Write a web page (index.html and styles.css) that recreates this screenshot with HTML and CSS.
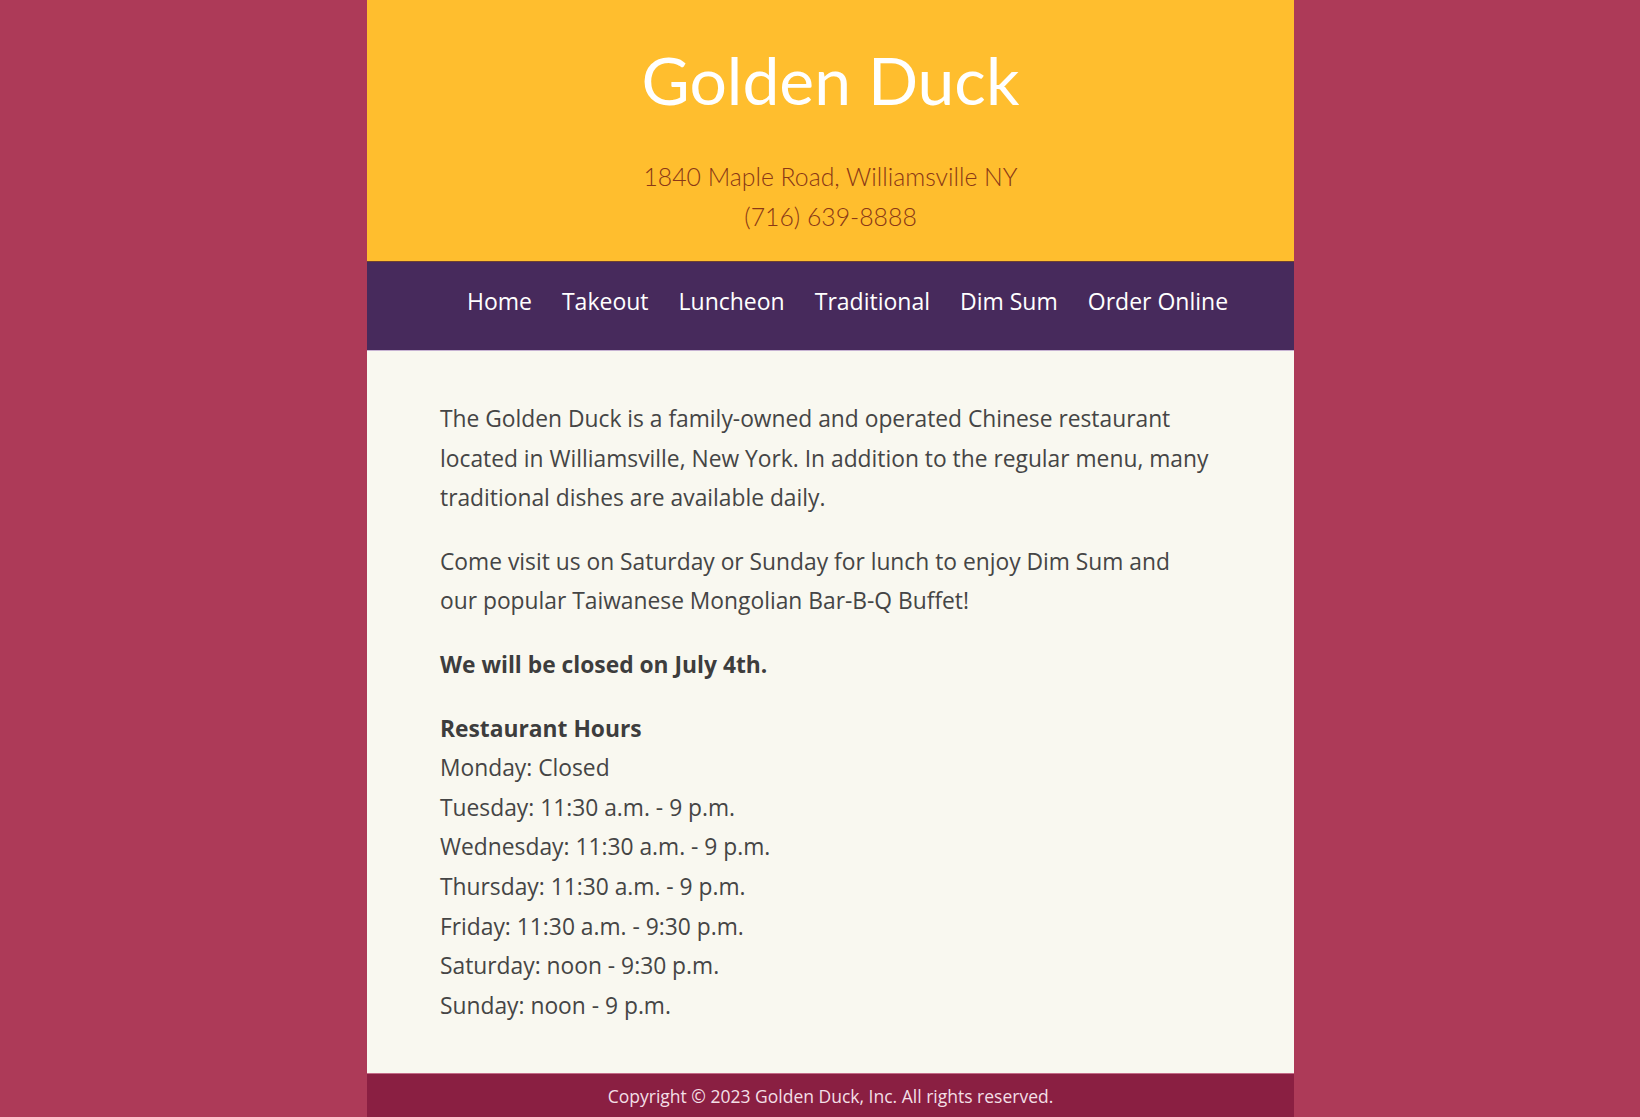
FILE: index.html
```html
<!DOCTYPE html>
<html lang="en">
<head>
<meta charset="utf-8">
<title>Golden Duck</title>
<link rel="stylesheet" href="styles.css">
</head>
<body>
<div class="page">
  <header class="site-header">
    <h1 class="site-title">Golden Duck</h1>
    <p class="address">1840 Maple Road, Williamsville NY<br>(716) 639-8888</p>
  </header>
  <nav class="site-nav">
    <ul class="nav-list">
      <li><a href="#">Home</a></li>
      <li><a href="#">Takeout</a></li>
      <li><a href="#">Luncheon</a></li>
      <li><a href="#">Traditional</a></li>
      <li><a href="#">Dim Sum</a></li>
      <li><a href="#">Order Online</a></li>
    </ul>
  </nav>
  <main class="content">
    <p>The Golden Duck is a family-owned and operated Chinese restaurant located in Williamsville, New York. In addition to the regular menu, many traditional dishes are available daily.</p>
    <p>Come visit us on Saturday or Sunday for lunch to enjoy Dim Sum and our&nbsp;popular Taiwanese Mongolian Bar-B-Q Buffet!</p>
    <p><strong>We will be closed on July 4th.</strong></p>
    <p><strong>Restaurant Hours</strong><br>
      Monday: Closed<br>
      Tuesday: 11:30 a.m. - 9 p.m.<br>
      Wednesday: 11:30 a.m. - 9 p.m.<br>
      Thursday: 11:30 a.m. - 9 p.m.<br>
      Friday: 11:30 a.m. - 9:30 p.m.<br>
      Saturday: noon - 9:30 p.m.<br>
      Sunday: noon - 9 p.m.</p>
  </main>
  <footer class="site-footer">
    <p>Copyright &copy; 2023 Golden Duck, Inc. All rights reserved.</p>
  </footer>
</div>
</body>
</html>
```

FILE: styles.css
```css
html, body {
  margin: 0;
  padding: 0;
}
body {
  background: #ad3a58;
  padding-left: 21px;
  font-family: "Open Sans", "Noto Sans", sans-serif;
  color: #454545;
}
.page {
  width: 927px;
  margin: 0 auto;
  background: #f9f8f0;
}
.site-header {
  background: #ffbe2e;
  text-align: center;
  padding: 40px 0 24px;
  font-family: "Lato", "Noto Sans", sans-serif;
}
.site-title {
  margin: 0 0 37px;
  font-size: 66px;
  line-height: 80px;
  font-weight: 400;
  color: #ffffff;
}
.address {
  margin: 0;
  font-size: 24.8px;
  line-height: 40px;
  font-weight: 300;
  color: #8a3816;
}
.site-nav {
  background: #472a5c;
  border-top: 1px solid #6e4032;
  border-bottom: 1px solid #c7b3d3;
}
.nav-list {
  list-style: none;
  margin: 0;
  padding: 23px 0 33px 34px;
  display: flex;
  justify-content: center;
}
.nav-list a {
  display: block;
  padding: 0 15px;
  font-size: 23px;
  line-height: 32px;
  color: #ffffff;
  text-decoration: none;
}
.content {
  padding: 24px 73px 24px;
  font-size: 22.8px;
  line-height: 39.6px;
}
.content p {
  margin: 24px 0;
}
.content strong {
  font-weight: 700;
  color: #3d3d3d;
}
.site-footer {
  background: #8a1f42;
  border-top: 1px solid #c46b87;
  text-align: center;
  padding: 10px 0 12px;
}
.site-footer p {
  margin: 0;
  font-size: 17.5px;
  line-height: 24px;
  color: #f3dfe6;
}
```
